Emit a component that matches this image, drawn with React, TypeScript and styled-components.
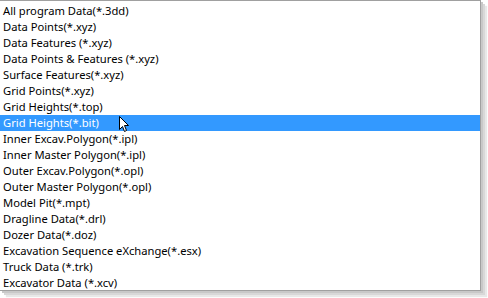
import React from "react";
import styled, { createGlobalStyle } from "styled-components";

const Global = createGlobalStyle`
  html, body { margin: 0; padding: 0; background: #ffffff; }
  body { width: 488px; height: 298px; overflow: hidden; }
`;

const Frame = styled.div`
  position: relative;
  box-sizing: border-box;
  width: 481px;
  height: 291px;
  background: #ffffff;
  border-top: 1px solid #a0a0a0;
  border-right: 1px solid #a0a0a0;
  border-bottom: 1px solid #a0a0a0;
  box-shadow: 2px 2px 0 #c8c8c8, 4px 4px 0 #d8d8d8, 6px 6px 1px #e8e8e8;
`;

const List = styled.ul`
  list-style: none;
  margin: 0;
  padding: 2px 0 0 0;
  display: flex;
  flex-direction: column;
`;

const Item = styled.li<{ $selected?: boolean }>`
  height: 16px;
  line-height: 16px;
  padding-left: 3px;
  font-family: "Noto Sans", "Open Sans", sans-serif;
  font-size: 11.2px;
  color: ${(p) => (p.$selected ? "#ffffff" : "#000000")};
  background: ${(p) => (p.$selected ? "#3399ff" : "transparent")};
  white-space: nowrap;
`;

const Cursor = styled.svg`
  position: absolute;
  left: 119px;
  top: 115px;
`;

const items = [
  "All program Data(*.3dd)",
  "Data Points(*.xyz)",
  "Data Features (*.xyz)",
  "Data Points & Features (*.xyz)",
  "Surface Features(*.xyz)",
  "Grid Points(*.xyz)",
  "Grid Heights(*.top)",
  "Grid Heights(*.bit)",
  "Inner Excav.Polygon(*.ipl)",
  "Inner Master Polygon(*.ipl)",
  "Outer Excav.Polygon(*.opl)",
  "Outer Master Polygon(*.opl)",
  "Model Pit(*.mpt)",
  "Dragline Data(*.drl)",
  "Dozer Data(*.doz)",
  "Excavation Sequence eXchange(*.esx)",
  "Truck Data (*.trk)",
  "Excavator Data (*.xcv)",
];

export default function App() {
  return (
    <>
      <Global />
      <Frame>
        <List>
          {items.map((t, i) => (
            <Item key={t} $selected={i === 7}>
              {t}
            </Item>
          ))}
        </List>
        <Cursor width="12" height="18" viewBox="0 0 12 18">
          <path
            d="M0.5 0.5 L0.5 13.5 L3.5 10.5 L5.5 15.5 L7.5 14.5 L5.5 9.5 L9.5 9.5 Z"
            fill="#ffffff"
            stroke="#000000"
            strokeWidth="1"
          />
        </Cursor>
      </Frame>
    </>
  );
}
